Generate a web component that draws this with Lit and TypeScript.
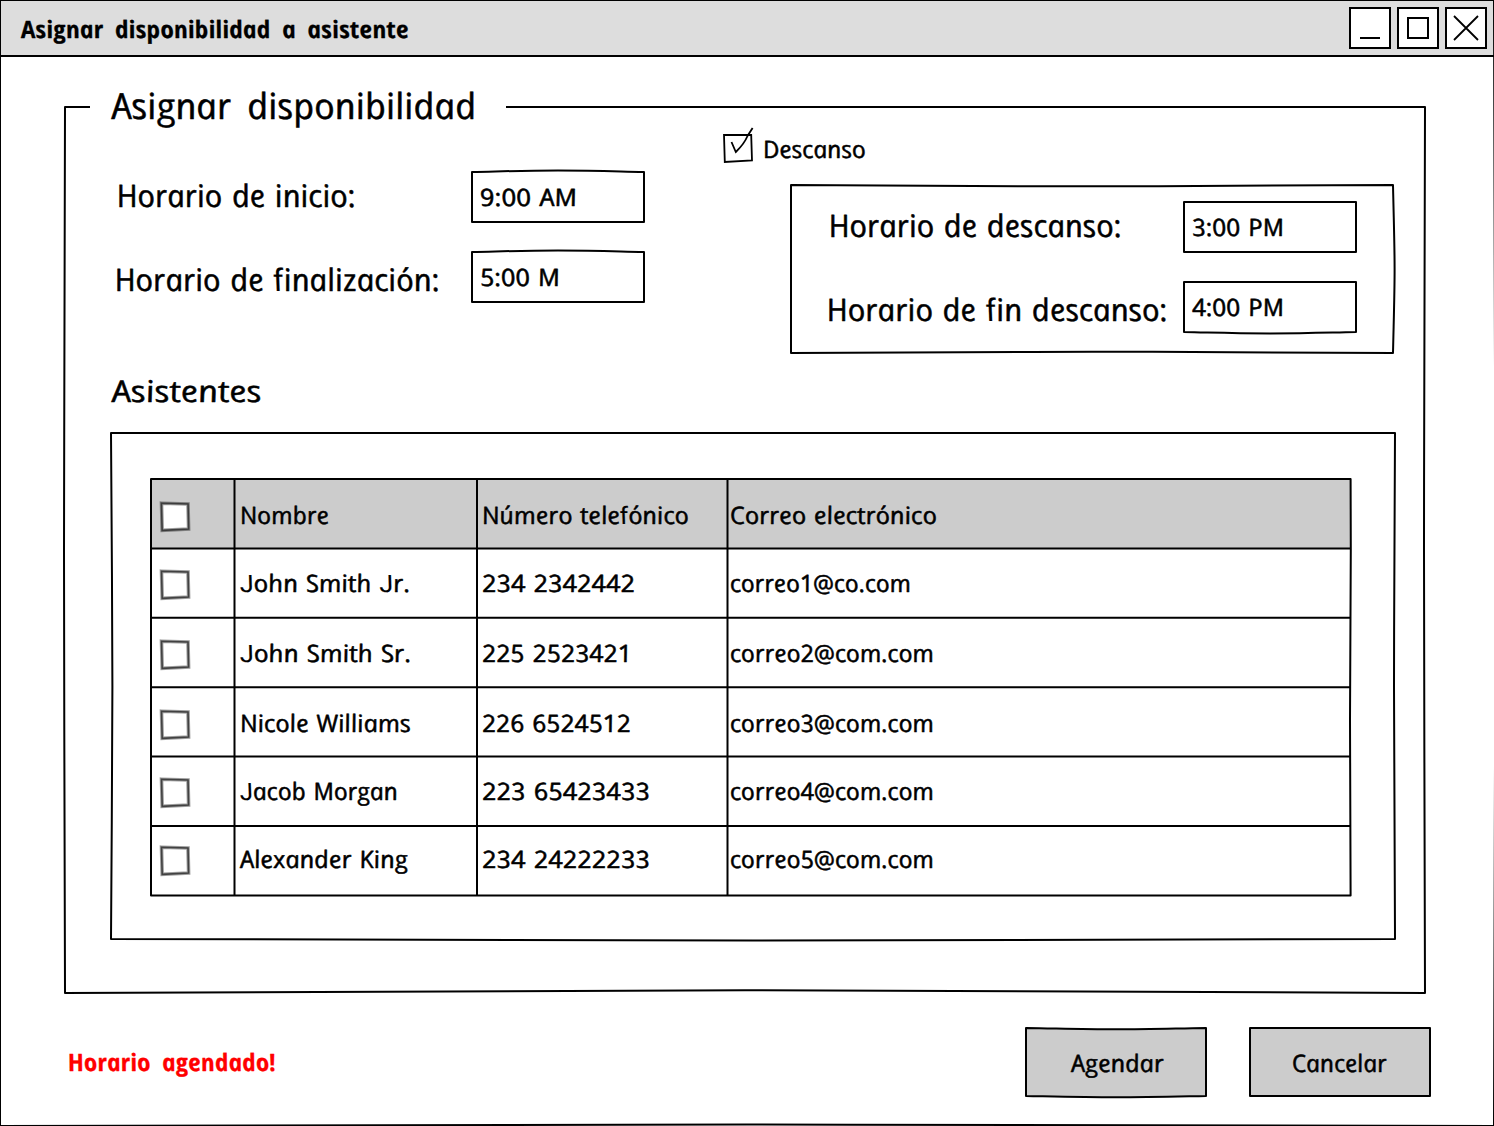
import { LitElement, html, svg, css } from "lit";
import { customElement } from "lit/decorators.js";

// f and J come from a face where neither drops below the baseline.
const glyphs = (text: string) =>
  text.split(/([fJ])/).filter(Boolean).map((p) => (p === "f" || p === "J" ? svg`<tspan class="alt">${p}</tspan>` : p));

// Upright hand-style lettering: an italic face set upright again, stretched to a fixed width.
const ink = (text: string, width: number, size = 24, cls = "") => {
  const base = Math.round(size * 0.8) + 0.3;
  return html`<svg class="ink ${cls}" width=${width} height=${size} aria-label=${text}>
    <text transform="translate(1.2 ${base}) skewX(12)" font-size=${size} textLength=${width}
      lengthAdjust="spacingAndGlyphs">${glyphs(text)}</text>
  </svg>`;
};

// Hand-drawn outline behind a box; the path uses the box's own pixel coordinates.
const outline = (d: string, fill = "none") => svg`<svg class="outline"><path d=${d} fill=${fill}></path></svg>`;

const BOX_PLAIN = "M0 0H172V50H0Z";
const BOX_TOP = "M0 0C40-.9 50-1.4 86-1.4S132-.9 172 0V50H0Z";
const BOX_BOTTOM = "M0 0H172V50C132 50.9 122 51.4 86 51.4S40 50.9 0 50Z";

interface Row {
  name: string; nameW: number;
  phone: string; phoneW: number;
  mail: string; mailW: number;
  top: number;
}

const ROWS: Row[] = [
  { name: "Nombre", nameW: 89, phone: "Número telefónico", phoneW: 207, mail: "Correo electrónico", mailW: 207, top: 26 },
  { name: "John Smith Jr.", nameW: 170, phone: "234 2342442", phoneW: 153, mail: "correo1@co.com", mailW: 181, top: 24.6 },
  { name: "John Smith Sr.", nameW: 171, phone: "225 2523421", phoneW: 150, mail: "correo2@com.com", mailW: 204, top: 25.2 },
  { name: "Nicole Williams", nameW: 171, phone: "226 6524512", phoneW: 149, mail: "correo3@com.com", mailW: 204, top: 25.8 },
  { name: "Jacob Morgan", nameW: 158, phone: "223 65423433", phoneW: 168, mail: "correo4@com.com", mailW: 204, top: 24.4 },
  { name: "Alexander King", nameW: 168, phone: "234 24222233", phoneW: 168, mail: "correo5@com.com", mailW: 204, top: 23 },
];

@customElement("app-root")
export class AppRoot extends LitElement {
  static styles = css`
    :host { display: block; }
    .window {
      position: relative; box-sizing: border-box; width: 1494px; height: 1126px;
      overflow: hidden; background: #fff; display: flex; flex-direction: column;
      font-family: "Open Sans", "Noto Sans", sans-serif;
    }
    .ink { display: block; overflow: visible; flex: none; }
    .ink text { font-family: "Open Sans", "Noto Sans", sans-serif; font-style: italic; font-weight: 500; fill: #000; stroke: #000; stroke-width: .5; stroke-linejoin: round; word-spacing: .05em; }
    .ink .alt { font-family: Roboto, sans-serif; font-weight: 400; stroke-width: .15; }
    .ink.wide text { word-spacing: .18em; }
    .ink.bold text { font-weight: 700; stroke-width: .3; word-spacing: .24em; }
    .ink.alert text { fill: #f00; stroke: #f00; }
    .outline { position: absolute; left: 0; top: 0; width: 100%; height: 100%; overflow: visible; z-index: 0; pointer-events: none; }
    .outline path { stroke: #000; stroke-width: 2; stroke-linejoin: round; }
    .ink, .check, .tick { position: relative; z-index: 1; }
    .titlebar {
      box-sizing: border-box; height: 57px; flex: none; display: flex; align-items: flex-start;
      justify-content: space-between; padding: 7px 7px 0 21px; background: #ddd; border-bottom: 2px solid #000;
    }
    .title { padding-top: 12px; }
    .controls { display: flex; gap: 6px; }
    .controls svg { display: block; }
    .group { position: relative; box-sizing: border-box; width: 1360px; height: 886px; margin: 50px 0 0 65px; display: flex; flex-direction: column; flex: none; }
    .legend { margin: -17px 0 0 47px; }
    .schedule { display: flex; height: 227px; padding-left: 50px; }
    .fields { display: flex; flex-direction: column; gap: 30px; }
    .work { padding-top: 46px; }
    .field { display: grid; grid-template-columns: 357px 172px; height: 50px; }
    .label { padding: 10px 0 0 1.5px; }
    .label.low { padding: 14px 0 0 0; }
    .input { position: relative; box-sizing: border-box; padding: 15px 0 0 8px; }
    .rest { margin-left: 79px; display: flex; flex-direction: column; }
    .toggle { display: flex; height: 59px; }
    .toggle .ink { margin: 13px 0 0 9.5px; }
    .tick { display: block; overflow: visible; margin-top: 1px; }
    .restbox { position: relative; box-sizing: border-box; width: 602px; height: 168px; margin-left: 68px; padding: 17px 0 0 36px; }
    .heading { margin: 25px 0 25px 47px; }
    .panel { position: relative; box-sizing: border-box; width: 1284px; height: 506px; margin-left: 46px; padding: 46px 0 0 40px; }
    .table { position: relative; width: 1199px; }
    .row { display: grid; grid-template-columns: 83.5px 242.5px 250.5px 622.5px; height: 69.4px; align-items: start; }
    .row.head { background: #ccc; }
    .check { display: block; overflow: visible; margin: -4px 0 0 8.2px; }
    .name { padding-left: 5.5px; }
    .phone { padding-left: 4.7px; }
    .mail { padding-left: 2.2px; }
    .footer { display: flex; justify-content: space-between; margin: 35px 64px 0 68px; flex: none; }
    .status { padding-top: 24px; }
    .actions { display: flex; gap: 44px; }
    .button { position: relative; box-sizing: border-box; width: 180px; height: 68px; display: flex; justify-content: center; padding: 25px 0 0 2px; border: 0; background: none; margin: 0; }
    .button:last-child { padding-left: 0; padding-right: 1px; }
  `;

  private field(label: string, labelW: number, value: string, valueW: number, shape: string, low = false) {
    return html`<div class="field">
      <div class="label ${low ? "low" : ""}">${ink(label, labelW, 31)}</div>
      <div class="input">${outline(shape)}${ink(value, valueW)}</div>
    </div>`;
  }

  private row(r: Row, head: boolean) {
    return html`<div class="row ${head ? "head" : ""}">
      <div style="padding-top:${r.top}px">
        <svg class="check" width="32" height="31" viewBox="0 0 32 31">
          <path d="M2.5 2.2L29 3L29.6 28L3.2 29.4Z" fill="#fff" stroke="#000" stroke-opacity=".38" stroke-width="3.6"></path>
          <path d="M2.5 2.2L29 3L29.6 28L3.2 29.4Z" fill="none" stroke="#222" stroke-opacity=".75" stroke-width="1.6"></path>
        </svg>
      </div>
      <div class="name" style="padding-top:${r.top}px">${ink(r.name, r.nameW)}</div>
      <div class="phone" style="padding-top:${r.top}px">${ink(r.phone, r.phoneW)}</div>
      <div class="mail" style="padding-top:${r.top}px">${ink(r.mail, r.mailW)}</div>
    </div>`;
  }

  render() {
    return html`<div class="window">
      <div class="titlebar">
        <div class="title">${ink("Asignar disponibilidad a asistente", 388, 24, "bold")}</div>
        <div class="controls">
          ${["M11 31H31", "M11 11H31V31H11Z", "M9 9L33 33M33 9L9 33"].map((d, i) => html`
            <svg width="42" height="42" fill="none" stroke="#000" stroke-width="2">
              <rect x="1" y="1" width="40" height="40" fill="#fff"></rect>
              <path d=${d} stroke-width=${i === 2 ? 1.8 : 2}></path>
            </svg>`)}
        </div>
      </div>
      <div class="group">
        ${outline("M25 0H0C.2 180-1 300-1 443S-.2 760 0 886C300 884.5 500 883.2 680 883.2S1060 885 1360 886C1359.8 760 1359 580 1359 443S1359.8 180 1360 0H441")}
        <div class="legend">${ink("Asignar disponibilidad", 365, 36, "wide")}</div>
        <div class="schedule">
          <div class="fields work">
            ${this.field("Horario de inicio:", 239, "9:00 AM", 97, BOX_TOP)}
            ${this.field("Horario de finalización:", 325, "5:00 M", 80, BOX_TOP, true)}
          </div>
          <div class="rest">
            <div class="toggle">
              <svg class="tick" width="30" height="36" fill="none" stroke="#000">
                <path d="M1 8L28.2 8L29 33.5L1.8 35Z" stroke-width="1.8"></path>
                <path d="M8.5 15L12.8 25C18 20 22 15 24.5 9L29.6 1" stroke-width="1.8"></path>
              </svg>
              ${ink("Descanso", 103)}
            </div>
            <div class="restbox fields">
              ${outline("M0 0C150 1 210 1.3 301 1.3S450 .3 602 0C603 45 603.6 60 603.6 84S603 125 602 168C450 167 390 166.8 301 166.8S150 167.8 0 168Z")}
              ${this.field("Horario de descanso:", 293, "3:00 PM", 92, BOX_PLAIN)}
              ${this.field("Horario de fin descanso:", 341, "4:00 PM", 92, BOX_BOTTOM, true)}
            </div>
          </div>
        </div>
        <div class="heading">${ink("Asistentes", 150, 30)}</div>
        <div class="panel">
          ${outline("M0 0H1284C1283.8 90 1283 170 1283 253S1283.8 420 1284 506C1000 506.8 840 507.4 642 507.4S280 506.4 0 506C.4 420 1.4 340 1.4 253S.4 90 0 0Z")}
          <div class="table">
            ${ROWS.map((r, i) => this.row(r, i === 0))}
            ${outline("M0 0H1199.6L1199.8 69.4L1199 240L1199.6 416.4H0ZM0 69.4H1199.8M0 138.8H1199M0 208.2H1199M0 277.6H1199M0 347H1199M83.5 0V416.4M326 0V416.4M576.5 0V416.4")}
          </div>
        </div>
      </div>
      <div class="footer">
        <div class="status">${ink("Horario agendado!", 208, 24, "bold alert")}</div>
        <div class="actions">
          <button class="button">${outline("M0 0C45 .8 60 1.3 90 1.3S135 .8 180 0V68C135 68.9 120 69.3 90 69.3S45 68.9 0 68Z", "#ccc")}${ink("Agendar", 93)}</button>
          <button class="button">${outline("M0 0H180V68H0Z", "#ccc")}${ink("Cancelar", 95)}</button>
        </div>
      </div>
      ${outline("M0 0H1494C1494 150 1495.4 360 1495.4 563S1494 980 1494 1126C1200 1125 980 1124.6 747 1124.6S300 1125.6 0 1126Z")}
    </div>`;
  }
}
